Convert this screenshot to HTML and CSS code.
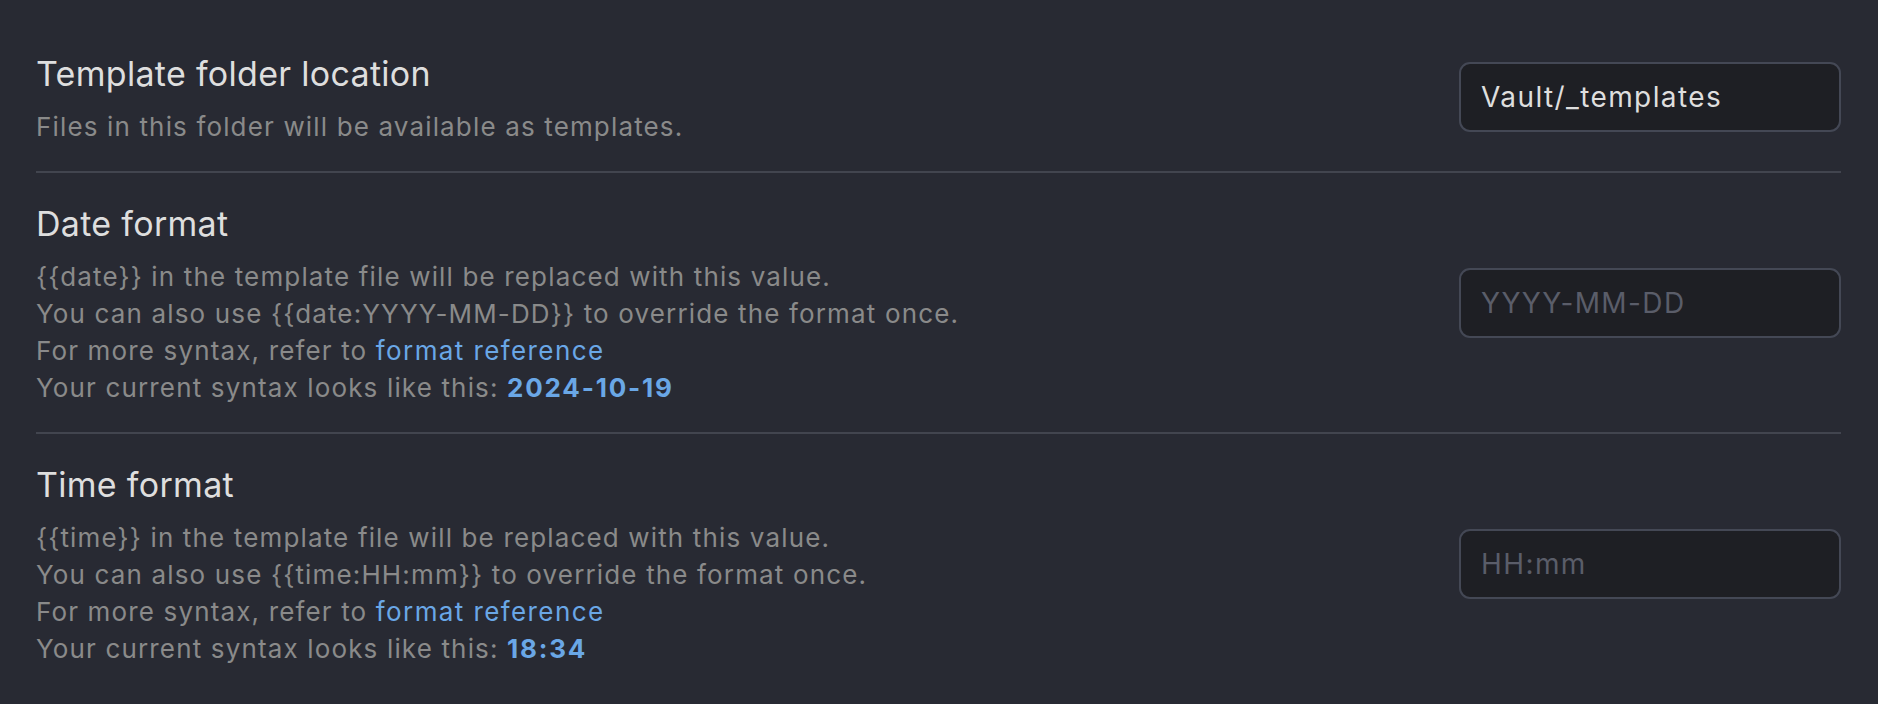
FILE: index.html
```html
<!DOCTYPE html>
<html lang="en">
<head>
    <meta charset="UTF-8">
    <meta name="viewport" content="width=device-width, initial-scale=1.0">
    <title>Templates</title>
    <link rel="stylesheet" href="styles.css">
</head>
<body>

<div class="settings">
    <div class="setting-item">
        <div class="setting-item-info">
            <div class="setting-item-name">Template folder location</div>
            <div class="setting-item-description">Files in this folder will be available as templates.</div>
        </div>
        <div class="setting-item-control">
            <input type="text" value="Vault/_templates" placeholder="Example: folder1/folder2">
        </div>
    </div>

    <div class="setting-item">
        <div class="setting-item-info">
            <div class="setting-item-name">Date format</div>
            <div class="setting-item-description">
                {{date}} in the template file will be replaced with this value.<br>
                You can also use {{date:YYYY-MM-DD}} to override the format once.<br>
                For more syntax, refer to <a href="#">format reference</a><br>
                Your current syntax looks like this: <b class="sample">2024-10-19</b>
            </div>
        </div>
        <div class="setting-item-control">
            <input type="text" placeholder="YYYY-MM-DD">
        </div>
    </div>

    <div class="setting-item">
        <div class="setting-item-info">
            <div class="setting-item-name">Time format</div>
            <div class="setting-item-description">
                {{time}} in the template file will be replaced with this value.<br>
                You can also use {{time:HH:mm}} to override the format once.<br>
                For more syntax, refer to <a href="#">format reference</a><br>
                Your current syntax looks like this: <b class="sample">18:34</b>
            </div>
        </div>
        <div class="setting-item-control">
            <input type="text" placeholder="HH:mm">
        </div>
    </div>
</div>

</body>
</html>
```

FILE: styles.css
```css
html, body {
    margin: 0;
    background: #282a33;
}
body {
    font-family: Inter, "Noto Sans", sans-serif;
    color: #dadada;
}
.settings {
    padding: 23px 37px 0 36px;
}
.setting-item {
    display: flex;
    align-items: center;
    padding: 31px 0 26px;
    border-top: 2px solid #42454f;
}
.setting-item:first-child {
    border-top: none;
}
.setting-item-info {
    flex: 1;
}
.setting-item-name {
    font-size: 34px;
    line-height: 40px;
    letter-spacing: 0.3px;
    margin-bottom: 14px;
    color: #dedede;
}
.setting-item-description {
    font-size: 26px;
    line-height: 37px;
    letter-spacing: 1.15px;
    color: #8a8a8a;
}
.setting-item-description a {
    color: #6aa7e6;
    text-decoration: none;
    letter-spacing: 1.4px;
}
.sample {
    color: #6aa7e6;
    font-weight: 700;
    letter-spacing: 1.8px;
}
.setting-item-control {
    margin-bottom: 5px;
}
.setting-item-control input {
    box-sizing: border-box;
    width: 382px;
    height: 70px;
    padding: 0 20px;
    font-family: Inter, "Noto Sans", sans-serif;
    font-size: 28px;
    letter-spacing: 1.4px;
    color: #dedede;
    background: #1e1f24;
    border: 2px solid #444855;
    border-radius: 11px;
    outline: none;
}
.setting-item-control input::placeholder {
    color: #5a5d69;
}
```
